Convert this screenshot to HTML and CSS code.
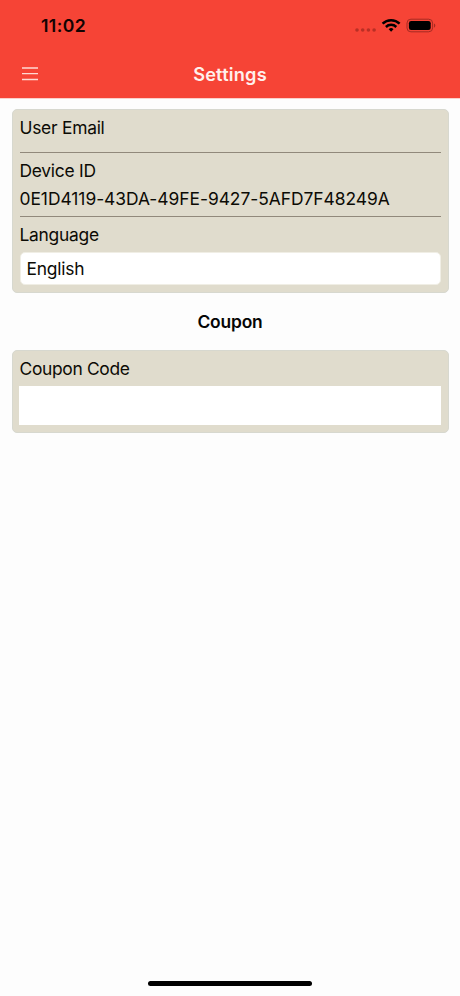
FILE: index.html
```html
<!DOCTYPE html>
<html lang="en">
<head>
<meta charset="utf-8">
<title>Settings</title>
<link rel="stylesheet" href="styles.css">
</head>
<body>
<div class="screen">
  <header class="header">
    <div class="status">
      <span class="time">11:02</span>
      <svg class="indicators" width="84" height="18" viewBox="0 0 84 18">
        <g fill="#b92f25"><circle cx="5" cy="13" r="1.8"/><circle cx="10.7" cy="13" r="1.8"/><circle cx="16.4" cy="13" r="1.8"/><circle cx="22.1" cy="13" r="1.8"/></g>
        <g fill="none" stroke="#000" stroke-width="2.5">
          <path d="M30.6 6.700a12.200 12.200 0 0 1 17 0"/>
          <path d="M33.900 10a7.400 7.400 0 0 1 10.400 0"/>
        </g>
        <path d="M39.100 14.700l-2.400-2.500a3.500 3.500 0 0 1 4.800 0z"/>
        <rect x="55" y="2.200" width="25.600" height="12.600" rx="3.900" fill="none" stroke="#a52b22" stroke-width="1"/>
        <rect x="56.900" y="4" width="21.800" height="9" rx="2.300"/>
        <path d="M82 6.500c1.800.6 1.800 3.600 0 4.200z" fill="#a52b22"/>
      </svg>
    </div>
    <div class="navbar">
      <svg class="menu" width="16" height="14" viewBox="0 0 16 14"><path d="M0 1h16M0 6.700h16M0 12.500h16" stroke="#ffd9d3" stroke-width="1.300"/></svg>
      <h1 class="title">Settings</h1>
    </div>
  </header>
  <main class="content">
    <section class="card">
      <div class="row email"><span class="label">User Email</span></div>
      <div class="row device">
        <span class="label">Device ID</span>
        <span class="label device-id">0E1D4119-43DA-49FE-9427-5AFD7F48249A</span>
      </div>
      <div class="language">
        <span class="label">Language</span>
        <div class="select">English</div>
      </div>
    </section>
    <h2 class="section-title">Coupon</h2>
    <section class="card coupon">
      <span class="label coupon-label">Coupon Code</span>
      <input class="code" type="text" aria-label="Coupon Code">
    </section>
  </main>
  <div class="home"></div>
</div>
</body>
</html>
```
FILE: styles.css
```css
* { box-sizing: border-box; }
body { margin: 0; background: #fdfdfd; font-family: Inter, "Liberation Sans", sans-serif; font-size: 17.4px; color: #0c0b05; }
.screen { height: 996px; display: flex; flex-direction: column; }
.header { height: 98px; background: #f64436; box-shadow: 0 1px 0 #fbd0cb; }
.status { height: 50px; padding: 2px 24px 0 41px; display: flex; align-items: center; justify-content: space-between; }
.time { font-size: 17.6px; font-weight: 600; line-height: 24px; letter-spacing: 0.4px; color: #120302; }
.indicators { display: block; }
.navbar { height: 48px; display: grid; grid-template-columns: 38px 1fr 38px; align-items: center; }
.menu { margin-left: 22px; }
.title { margin: 0; text-align: center; font-size: 18.2px; font-weight: 600; line-height: 24px; letter-spacing: 0.2px; color: #fff0ec; }
.content { flex: 1; padding: 11px 11.5px 0; }
.card { height: 184px; border: 1px solid #d7d8cf; border-radius: 5px; background: #e0dccd; padding: 0 7px; }
.row { border-bottom: 1px solid #91897b; }
.label { display: block; line-height: 28px; letter-spacing: -0.25px; white-space: nowrap; }
.device-id { letter-spacing: -0.03px; }
.email { height: 43px; padding-top: 4px; }
.device { height: 64px; padding-top: 4px; }
.language { padding-top: 4px; }
.select { height: 33px; margin-top: 3px; padding-left: 6px; background: #fff; border: 1px solid #f0eee5; border-radius: 5px; line-height: 31px; letter-spacing: -0.2px; }
.section-title { margin: 0; height: 57px; text-align: center; font-size: 17.4px; font-weight: 600; line-height: 57px; letter-spacing: -0.15px; color: #050505; }
.coupon { height: 83px; padding: 4px 7px 0 6.5px; }
.coupon-label { padding-left: 0.5px; letter-spacing: -0.32px; }
.code { display: block; width: 100%; height: 39px; margin-top: 3px; padding: 0 8px; border: 0; background: #fff; font: inherit; }
.home { width: 164px; height: 5px; margin: 0 auto 10px; border-radius: 3px; background: #000; }
```
